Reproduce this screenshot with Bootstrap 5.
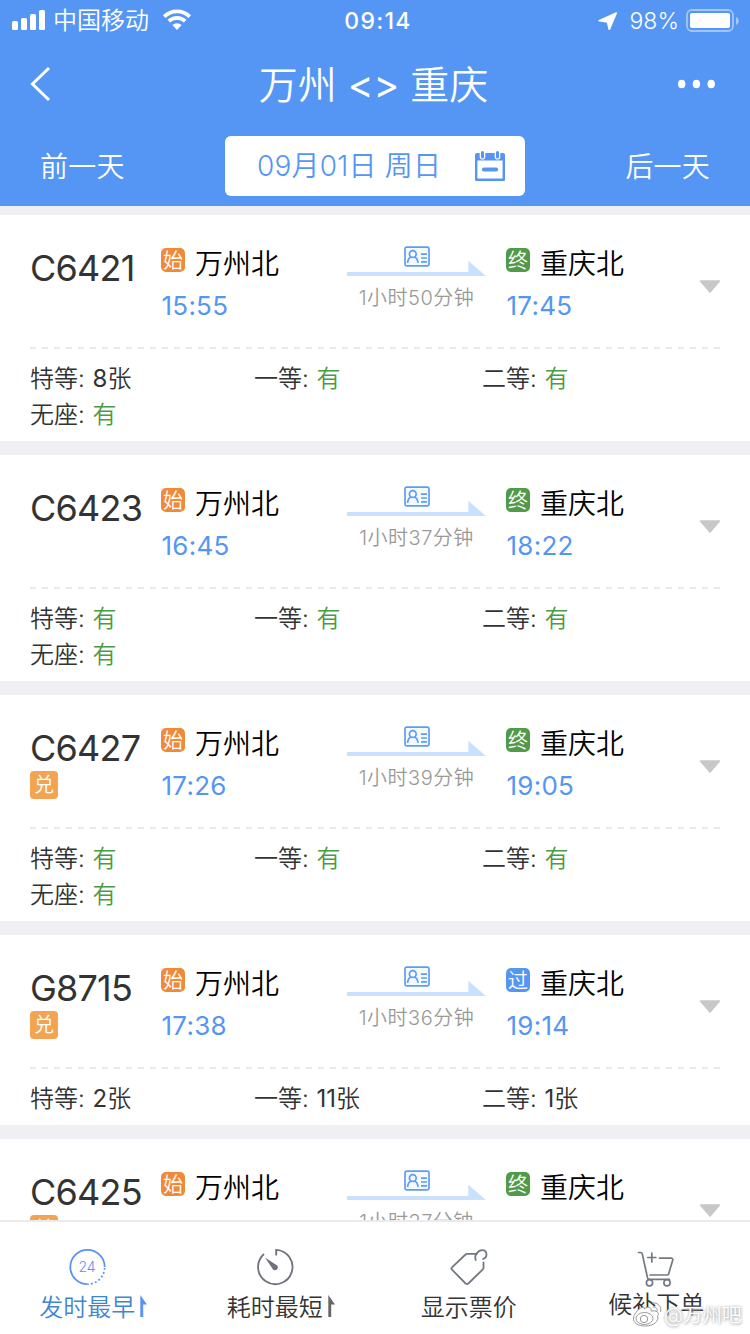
<!DOCTYPE html>
<html lang="zh-CN">
<head>
<meta charset="utf-8">
<meta name="viewport" content="width=device-width, initial-scale=1">
<title>万州 - 重庆</title>
<link href="https://cdn.jsdelivr.net/npm/bootstrap@5.3.0/dist/css/bootstrap.min.css" rel="stylesheet">
<style>
  :root { --sky: #5596f5; --gap: #efeff4; }
  body { font-family: "Inter", "Noto Sans CJK SC", sans-serif; font-weight: 350; color: #333; background: var(--gap); height: 1334px; overflow: hidden; }
  svg { display: block; flex: none; }
  .app-head { background: var(--sky); height: 206px; color: #fff; }
  .status-row { height: 40px; line-height: 40px; font-size: 24px; padding: 0 11px 0 12px; }
  .status-row > div { width: 33.333%; }
  .status-row span, .clock { padding-top: 2px; }
  .clock { font-size: 23px; font-weight: 500; letter-spacing: 1.3px; padding-left: 5px; }
  .title-row { height: 88px; padding: 0 34px 0 30px; }
  .title-row h1 { font-size: 39px; font-weight: 350; line-height: 88px; margin: 0; padding: 1px 0 0 3px; white-space: pre; }
  .swap { font-weight: 400; }
  .day-row { height: 60px; margin-top: 8px; font-size: 28px; line-height: 62px; letter-spacing: .2px; padding: 0 40px; }
  .date-box { width: 300px; height: 60px; background: #fff; color: var(--sky); border-radius: 6px; padding: 0 20px 0 32px; }
  .train-list { padding-top: 9px; gap: 14px; min-height: 0; }
  .train { background: #fff; flex: none; padding: 0 30px; }
  .train-top { height: 132px; }
  .no-col { width: 131px; padding-top: 28px; }
  .train-no { font-size: 36px; font-weight: 400; line-height: 50px; height: 48px; white-space: nowrap; letter-spacing: -.8px; }
  .redeem { width: 28px; height: 28px; line-height: 28px; font-size: 20px; border-radius: 4px; background: #f2a453; color: #fff; text-align: center; }
  .from-col { width: 186px; padding-top: 28px; }
  .to-col { width: 193px; padding: 28px 0 0 20px; }
  .mark-sq { width: 24px; height: 24px; line-height: 26px; border-radius: 5px; font-size: 20px; color: #fff; text-align: center; margin: 5px 10px 0 0; }
  .mark-start { background: #f08a3a; }
  .mark-end { background: #509a48; }
  .mark-pass { background: var(--sky); }
  .station { font-size: 28px; line-height: 42px; height: 40px; color: #000; }
  .hour { font-size: 26px; font-weight: 400; line-height: 36px; height: 34px; margin-top: 5px; padding-left: .5px; color: var(--sky); letter-spacing: .25px; }
  .way-col { width: 139px; padding-top: 31px; }
  .duration { font-size: 20px; line-height: 24px; margin-top: 9px; color: #999; text-align: center; white-space: nowrap; letter-spacing: .5px; }
  .num { font-weight: 400; }
  .fold { margin: 65px -1px 0 auto; align-self: flex-start; }
  .dash { height: 2px; margin-right: -1px; background: repeating-linear-gradient(90deg, #eaeaea 0 6px, transparent 6px 12px); }
  .seats { padding: 12px 0 8px; font-size: 24px; line-height: 36px; display: grid; grid-template-columns: 224px 228px 1fr; white-space: nowrap; word-spacing: 1px; }
  .has { color: #4b9a45; }
  .tab-bar { height: 114px; background: #fff; border-top: 2px solid #e9ebee; position: relative; }
  .tab-cell { padding-top: 26px; }
  .tab-cell.order { padding-top: 23px; }
  .tab-text { font-size: 24px; line-height: 34px; margin-top: 5px; }
  .active-tab { color: #3f86cf; }
  .flag { margin: 47px 0 0 4px; }
  .stamp { position: absolute; left: 632px; top: 78px; color: #fff; font-size: 19.5px; line-height: 30px; text-shadow: 0 0 3px #aaa, 1px 1px 3px #bbb; white-space: nowrap; }
</style>
</head>
<body class="d-flex flex-column">

<svg width="0" height="0" class="position-absolute">
  <symbol id="way" viewBox="0 0 139 31">
    <rect x="58" y="1.2" width="24" height="18.6" rx="1.6" fill="#f5faff" stroke="#5f9cf5" stroke-width="1.7"/>
    <circle cx="65.8" cy="8" r="3.4" fill="none" stroke="#5f9cf5" stroke-width="1.7"/>
    <path d="M60.600 17c.3-3.400 1.700-5.400 3.400-6M71 17c-.3-3.400-1.700-5.400-3.400-6M74 8.200h6M74 12h6M74 15.800h6" fill="none" stroke="#5f9cf5" stroke-width="1.700"/>
    <path d="M0 26h121.300V14.700L139 30H0z" fill="#cbe0fb"/>
  </symbol>
  <symbol id="fold" viewBox="0 0 22 14"><path d="M1.500 1h19L11 12z" fill="#c8c8c8" stroke="#c8c8c8" stroke-width="1.600" stroke-linejoin="round"/></symbol>
</svg>

<header class="app-head flex-shrink-0">
  <div class="status-row d-flex align-items-center">
    <div class="d-flex align-items-center">
      <svg width="34" height="20" viewBox="0 0 34 20" fill="#fff"><rect y="11" width="6" height="9" rx="1.500"/><rect x="9" y="8" width="6" height="12" rx="1.500"/><rect x="18" y="4" width="6" height="16" rx="1.500"/><rect x="27" width="6" height="20" rx="1.500"/></svg>
      <span style="margin-left:7px">中国移动</span>
      <svg style="margin-left:13px" width="30" height="22" viewBox="0 0 30 22"><path d="M2.200 7.600a18.200 18.200 0 0 1 25.600 0M6.800 12.200a11.800 11.800 0 0 1 16.400 0" fill="none" stroke="#fff" stroke-width="3.800"/><path d="M10.400 16a6.700 6.700 0 0 1 9.200 0L15 21z" fill="#fff"/></svg>
    </div>
    <div class="clock text-center">09:14</div>
    <div class="d-flex align-items-center justify-content-end">
      <svg width="20" height="20" viewBox="0 0 20 20"><path d="M18.300 3 11.300 19.500 9.500 12 1.200 10.700z" fill="#fff" stroke="#fff" stroke-width="1.600" stroke-linejoin="round"/></svg>
      <span style="margin:0 7px 0 12px;font-size:23px">98%</span>
      <svg width="53" height="24" viewBox="0 0 53 24"><rect x="1" y="2" width="46" height="21" rx="5" fill="none" stroke="#fff" stroke-opacity=".45" stroke-width="1.800"/><rect x="4" y="5" width="40" height="15" rx="2" fill="#fff"/><path d="M50 9c3.600 1.400 3.600 6.600 0 8z" fill="#fff" opacity=".5"/></svg>
    </div>
  </div>
  <div class="title-row d-flex align-items-center justify-content-between">
    <svg width="36" height="36" viewBox="0 0 36 36"><path d="M19 2 2.500 18 19 34" fill="none" stroke="#fff" stroke-width="3"/></svg>
    <h1>万州 <span class="swap">&lt;&gt;</span> 重庆</h1>
    <svg width="38" height="10" viewBox="0 0 38 10" fill="#fff"><ellipse cx="3.700" cy="5" rx="3.700" ry="4.300"/><ellipse cx="18.400" cy="5" rx="3.700" ry="4.300"/><ellipse cx="33.200" cy="5" rx="3.700" ry="4.300"/></svg>
  </div>
  <div class="day-row d-flex justify-content-between">
    <span>前一天</span>
    <div class="date-box d-flex align-items-center justify-content-between">
      <span>09月01日 周日</span>
      <svg width="30" height="31" viewBox="0 0 30 31"><path d="M1.200 3v25.800h27.600V3" fill="none" stroke="#5596f5" stroke-width="2.400" stroke-linejoin="round"/><path d="M0 4q0-2 2-2h26q2 0 2 2v5.500H0z" fill="#5596f5"/><path d="M7.500 1v4.800M22.500 1v4.800" stroke="#fff" stroke-width="5.600" stroke-linecap="round"/><path d="M7.500 1.600v4.400M22.500 1.600v4.400" stroke="#5596f5" stroke-width="3" stroke-linecap="round"/><path d="M8.800 18.500h12.400" stroke="#5596f5" stroke-width="3.800" stroke-linecap="round"/></svg>
    </div>
    <span>后一天</span>
  </div>
</header>

<main class="train-list d-flex flex-column flex-grow-1 overflow-hidden" id="trains"></main>

<nav class="tab-bar d-flex flex-shrink-0">
  <div class="tab-cell col-3 d-flex justify-content-center active-tab">
    <div class="d-flex flex-column align-items-center">
      <svg width="38" height="38" viewBox="0 0 38 38"><g fill="none" stroke="#5b92f3" stroke-width="1.800"><path d="M19.500 36.200A17.200 17.200 0 1 1 36.700 19"/><path d="M36.700 19A17.200 17.200 0 0 1 19.500 36.200" stroke-dasharray="1.800 2.300" stroke-dashoffset="-1"/></g><text x="19" y="24.300" text-anchor="middle" font-size="14" fill="#5b92f3">24</text></svg>
      <div class="tab-text">发时最早</div>
    </div>
    <svg class="flag" width="9" height="23" viewBox="0 0 9 23"><path d="M1.300 0 8 9.500H4.200V22H1.300z" fill="#5b92f3"/></svg>
  </div>
  <div class="tab-cell col-3 d-flex justify-content-center">
    <div class="d-flex flex-column align-items-center">
      <svg width="38" height="38" viewBox="0 0 38 38"><path d="M20.200 7.500V1.800A17.200 17.200 0 1 1 8 6" fill="none" stroke="#6e737b" stroke-width="1.800"/><path d="M9 9.500 20 16.700a2.900 2.900 0 1 1-3.800 3.600z" fill="#6e737b"/></svg>
      <div class="tab-text">耗时最短</div>
    </div>
    <svg class="flag" width="9" height="23" viewBox="0 0 9 23"><path d="M1.300 0 8 9.500H4.200V22H1.300z" fill="#666"/></svg>
  </div>
  <div class="tab-cell col-3 d-flex flex-column align-items-center">
    <svg width="38" height="38" viewBox="0 0 38 38"><path d="M27 5.800H17.200q-1 0-1.700.7L2 19.300q-1.100 1.200 0 2.400l13.600 13.800q1.400 1.100 2.800 0L32.800 21.400q.7-.7.700-1.600V14.500M25.700 11.800c-1.800-4.500 2.500-10 7.200-9.600 4.600.6 4.800 7.600.2 8.800" fill="none" stroke="#737982" stroke-width="1.800" stroke-linecap="round"/></svg>
    <div class="tab-text">显示票价</div>
  </div>
  <div class="tab-cell order col-3 d-flex flex-column align-items-center">
    <svg width="38" height="38" viewBox="0 0 38 38" overflow="visible"><g fill="none" stroke="#737982" stroke-width="1.700" stroke-linecap="round"><path d="M1.500 7.500h2q1.400 0 1.800 1.500l5.200 23.800q.4 1.500 2 1.500h20M13 30h17q1.300 0 1.700-1.300l4-13.400q.5-2.200-1.700-2.200H22.500M10.800 12.500h8M14.800 8v9"/><circle cx="12.500" cy="37.800" r="3.100"/><circle cx="30" cy="37.800" r="3.100"/></g></svg>
    <div class="tab-text">候补下单</div>
  </div>
  <div class="stamp d-flex align-items-center">
    <svg width="32" height="28" viewBox="0 0 32 28"><g fill="#fff" stroke="#999" stroke-width="1"><path d="M12 8c4-3 8-2 7 2 6-1 9 2 6.500 5 2 5-4 10-12 10C6 25 1 22 1.500 17 2 13 6 8 10 6.500c2-.5 3 0 2 1.500z"/><ellipse cx="12.500" cy="17.500" rx="8.500" ry="6"/><circle cx="12" cy="18" r="3.700"/><path d="M20 2c6-1 10 4 8.500 9M21 6c3-.5 5 2 4 4.500" fill="none"/></g></svg>
    <span>@万州吧</span>
  </div>
</nav>

<script src="https://cdn.jsdelivr.net/npm/bootstrap@5.3.0/dist/js/bootstrap.bundle.min.js"></script>
<script>
  const trains = [
    { no: 'C6421', dep: '15:55', arr: '17:45', time: '1小时50分钟', end: '终', seats: [['特等', '8张'], ['一等', '有'], ['二等', '有'], ['无座', '有']] },
    { no: 'C6423', dep: '16:45', arr: '18:22', time: '1小时37分钟', end: '终', seats: [['特等', '有'], ['一等', '有'], ['二等', '有'], ['无座', '有']] },
    { no: 'C6427', dep: '17:26', arr: '19:05', time: '1小时39分钟', end: '终', redeem: true, seats: [['特等', '有'], ['一等', '有'], ['二等', '有'], ['无座', '有']] },
    { no: 'G8715', dep: '17:38', arr: '19:14', time: '1小时36分钟', end: '过', redeem: true, seats: [['特等', '2张'], ['一等', '11张'], ['二等', '1张']] },
    { no: 'C6425', dep: '17:47', arr: '18:24', time: '1小时37分钟', end: '终', redeem: true, seats: [] }
  ];
  const digits = s => s.replace(/\d+/g, '<span class="num">$&</span>');
  document.getElementById('trains').innerHTML = trains.map(t => `
    <section class="train">
      <div class="train-top d-flex">
        <div class="no-col"><div class="train-no">${t.no}</div>${t.redeem ? '<div class="redeem">兑</div>' : ''}</div>
        <div class="from-col">
          <div class="d-flex"><span class="mark-sq mark-start">始</span><span class="station">万州北</span></div>
          <div class="hour">${t.dep}</div>
        </div>
        <div class="way-col">
          <svg width="139" height="31"><use href="#way"/></svg>
          <div class="duration">${t.time}</div>
        </div>
        <div class="to-col">
          <div class="d-flex"><span class="mark-sq ${t.end === '终' ? 'mark-end' : 'mark-pass'}">${t.end}</span><span class="station">重庆北</span></div>
          <div class="hour">${t.arr}</div>
        </div>
        <svg class="fold" width="22" height="14"><use href="#fold"/></svg>
      </div>
      <div class="dash"></div>
      <div class="seats">${t.seats.map(([k, v]) => `<div>${k}: <span class="${v === '有' ? 'has' : ''}">${digits(v)}</span></div>`).join('')}</div>
    </section>`).join('');
</script>
</body>
</html>
